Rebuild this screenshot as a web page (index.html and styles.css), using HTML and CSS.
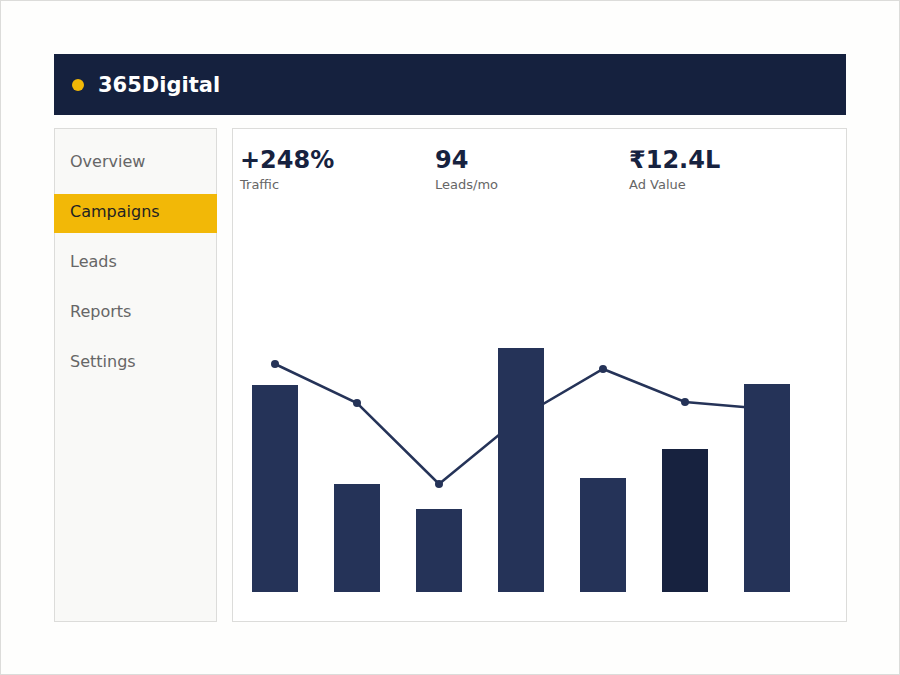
FILE: index.html
```html
<!DOCTYPE html>
<html lang="en">
<head>
    <meta charset="UTF-8">
    <meta name="viewport" content="width=device-width, initial-scale=1.0">
    <title>365Digital Dashboard</title>
    <link rel="stylesheet" href="styles.css">
</head>
<body>
    <div class="frame">
        <header class="topbar">
            <span class="brand-dot"></span>
            <span class="brand-name">365Digital</span>
        </header>

        <div class="layout">
            <nav class="sidebar">
                <div class="nav-item">Overview</div>
                <div class="nav-item active">Campaigns</div>
                <div class="nav-item">Leads</div>
                <div class="nav-item">Reports</div>
                <div class="nav-item">Settings</div>
            </nav>

            <main class="panel">
                <div class="stats">
                    <div class="stat">
                        <div class="stat-value">+248%</div>
                        <div class="stat-label">Traffic</div>
                    </div>
                    <div class="stat">
                        <div class="stat-value">94</div>
                        <div class="stat-label">Leads/mo</div>
                    </div>
                    <div class="stat">
                        <div class="stat-value">₹12.4L</div>
                        <div class="stat-label">Ad Value</div>
                    </div>
                </div>

                <!-- weekly bars with the trend line drawn underneath -->
                <svg class="chart" width="598" height="300" viewBox="0 0 598 300">
                    <polyline class="trend" points="35,72 117,111 199,192 281,125 363,77 445,110 527,117"/>
                    <g class="trend-dots">
                        <circle cx="35" cy="72" r="4"/>
                        <circle cx="117" cy="111" r="4"/>
                        <circle cx="199" cy="192" r="4"/>
                        <circle cx="281" cy="125" r="4"/>
                        <circle cx="363" cy="77" r="4"/>
                        <circle cx="445" cy="110" r="4"/>
                        <circle cx="527" cy="117" r="4"/>
                    </g>
                    <g class="bars">
                        <rect x="12" y="93" width="46" height="207"/>
                        <rect x="94" y="192" width="46" height="108"/>
                        <rect x="176" y="217" width="46" height="83"/>
                        <rect x="258" y="56" width="46" height="244"/>
                        <rect x="340" y="186" width="46" height="114"/>
                        <rect class="bar-dark" x="422" y="157" width="46" height="143"/>
                        <rect x="504" y="92" width="46" height="208"/>
                    </g>
                </svg>
            </main>
        </div>
    </div>
</body>
</html>
```

FILE: styles.css
```css
* {
    box-sizing: border-box;
}

body {
    margin: 0;
    padding: 0;
    font-family: "DejaVu Sans", Verdana, sans-serif;
    background: #fefefd;
}

.frame {
    width: 900px;
    height: 675px;
    border: 1px solid #dcdcda;
    padding: 53px 53px 52px;
    display: flex;
    flex-direction: column;
    gap: 13px;
}

.topbar {
    height: 61px;
    background: #15213e;
    display: flex;
    align-items: center;
    padding-left: 18px;
    gap: 14px;
}

.brand-dot {
    width: 12px;
    height: 12px;
    border-radius: 50%;
    background: #f2b807;
}

.brand-name {
    color: #ffffff;
    font-size: 21px;
    font-weight: 700;
}

.layout {
    flex: 1;
    display: grid;
    grid-template-columns: 163px 1fr;
    gap: 15px;
}

.sidebar {
    background: #f9f9f7;
    border: 1px solid #dcdcda;
    padding: 15px 0;
    display: flex;
    flex-direction: column;
    gap: 11px;
}

.nav-item {
    padding: 8px 15px 12px;
    font-size: 16px;
    color: #666666;
}

.nav-item.active {
    background: #f2b807;
    color: #222222;
    margin: 0 -1px;
    padding-left: 16px;
}

.panel {
    background: #ffffff;
    border: 1px solid #dcdcda;
    padding: 17px 8px 29px 7px;
    display: flex;
    flex-direction: column;
}

.stats {
    display: grid;
    grid-template-columns: 195px 194px 1fr;
}

.stat-value {
    font-size: 24px;
    font-weight: 700;
    color: #17223f;
}

.stat-label {
    margin-top: 3px;
    font-size: 13px;
    color: #666666;
}

.chart {
    display: block;
    margin-top: auto;
}

.trend {
    fill: none;
    stroke: #253358;
    stroke-width: 2.5;
}

.trend-dots circle {
    fill: #253358;
}

.bars rect {
    fill: #253358;
}

.bars .bar-dark {
    fill: #17223f;
}
```
